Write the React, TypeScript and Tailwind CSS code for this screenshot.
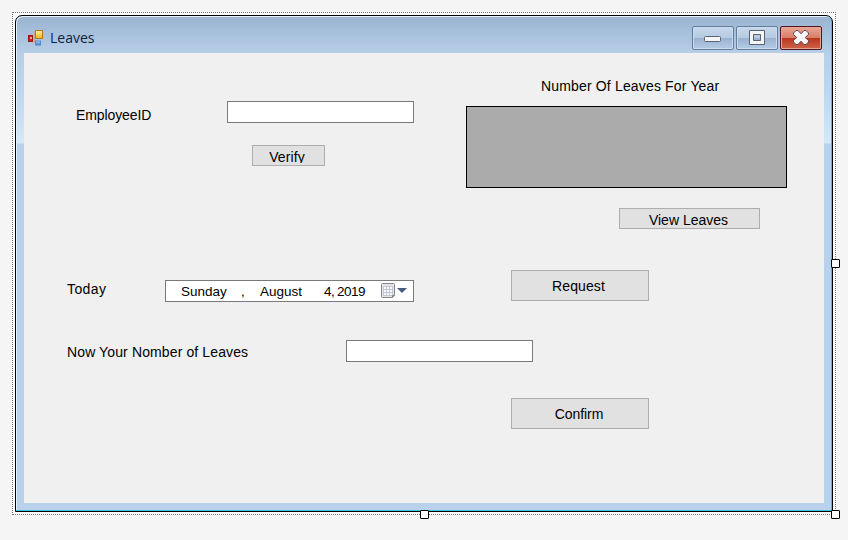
import React from "react";

function FormIcon() {
  return (
    <svg width="16" height="16" viewBox="0 0 16 16" className="shrink-0">
      <defs>
        <linearGradient id="gold" x1="0" y1="0" x2="0" y2="1">
          <stop offset="0" stopColor="#fff0a0" />
          <stop offset="1" stopColor="#eeb420" />
        </linearGradient>
        <linearGradient id="sky" x1="0" y1="0" x2="0" y2="1">
          <stop offset="0" stopColor="#b4d4ff" />
          <stop offset="1" stopColor="#3c78d0" />
        </linearGradient>
      </defs>
      <path d="M5 8.500h1.500v4h1M6.500 8.500v-6h1" stroke="#b5a999" fill="none" />
      <rect x="0.5" y="5.5" width="4" height="6" fill="#c8201c" stroke="#981814" />
      <rect x="2" y="7" width="2" height="2" fill="#f4a098" />
      <rect x="7.5" y="0.5" width="7" height="8" fill="url(#gold)" stroke="#b57a18" />
      <rect x="7.5" y="11" width="5" height="4" fill="url(#sky)" stroke="#5088d8" />
    </svg>
  );
}

function CaptionButtons() {
  return (
    <div className="flex gap-[2px]">
      <div className="flex h-6 w-[42px] items-center justify-center rounded-[2px] border border-[#637d9f] bg-[linear-gradient(#c6d8ec_0%,#b6cae1_48%,#98b1cf_50%,#b5cce6_100%)] shadow-[inset_0_0_0_1px_#c9dbed]">
        <svg width="18" height="8" viewBox="0 0 18 8" className="mt-[2px]">
          <rect x="0.5" y="1.5" width="16" height="5" rx="1" fill="#f5f5f5" stroke="#596273" />
        </svg>
      </div>
      <div className="flex h-6 w-[42px] items-center justify-center rounded-[2px] border border-[#637d9f] bg-[linear-gradient(#c6d8ec_0%,#b6cae1_48%,#98b1cf_50%,#b5cce6_100%)] shadow-[inset_0_0_0_1px_#c9dbed]">
        <svg width="18" height="16" viewBox="0 0 18 16" className="-mt-px">
          <path d="M1.5 .5h15v14h-15zM5.5 4.500h7v6h-7z" fillRule="evenodd" fill="#f5f5f5" stroke="#596273" />
        </svg>
      </div>
      <div className="flex h-6 w-[42px] items-center justify-center rounded-[2px] border border-[#4d1620] bg-[linear-gradient(#e9a796_0%,#d77e68_48%,#b8331b_50%,#cf6549_100%)] shadow-[inset_0_0_0_1px_#e8a494]">
        <svg width="18" height="16" viewBox="0 0 18 16" className="-mt-px">
          <path d="M4 .5h2L9 3.800 12 .5h2L16.500 3v1.500L13.200 7.500l3.300 3V12L14 14.500h-2L9 11.200 6 14.500H4L1.500 12v-1.500l3.300-3L1.500 4.500V3z" fill="#f7f7f7" stroke="#5a4755" strokeLinejoin="round" />
        </svg>
      </div>
    </div>
  );
}

function Calendar() {
  return (
    <svg width="27" height="17" viewBox="0 0 27 17" className="shrink-0">
      <path d="M1.500 .5h11q1 0 1 1v11l-2 2h-10q-1 0-1-1v-12q0-1 1-1z" fill="#e3e5e8" stroke="#85868a" />
      <path d="M2.500 3.500h9v9h-9zM5.500 3.500v9M8.500 3.500v9M2.500 6.500h9M2.500 9.500h9" fill="#f8f9fb" stroke="#c3c7d0" />
      <path d="M11.500 14.500v-2h2" fill="none" stroke="#85868a" />
      <path d="M16 5h10l-5 5z" fill="#465b80" />
    </svg>
  );
}

const input = "h-[22px] w-[187px] shrink-0 border border-[#7a7a7a] bg-white";
const button = "flex justify-center overflow-hidden border border-[#adadad] bg-[#e1e1e1]";
const handle = "absolute h-[9px] w-[9px] rounded-[1px] border border-black bg-white";

export default function App() {
  return (
    <div className="h-[540px] w-[848px] overflow-hidden bg-[#f5f5f5] pl-3 pt-3 font-['Liberation_Sans',Arial,sans-serif] text-[14px] leading-4 text-black">
      <div className="relative h-[503px] w-[824px] border border-dotted border-[#777] bg-[#fafafa] p-[2px]">
        <div className="flex h-[497px] w-[818px] flex-col rounded-t-[7px] border border-black bg-[linear-gradient(#9ab4d0_0px,#aac3de_22px,#b9cfe8_38px,#bdd5ee_75px,#d6e8f8_127px,#b9d1ea_128px)] px-2 shadow-[inset_-1px_-1px_0_#40c4de,inset_1px_1px_0_#e5f2fb]">
          <header className="flex h-[37px] items-start justify-between">
            <div className="flex items-center gap-[6px] pl-1 pt-[12px]">
              <FormIcon />
              <span className="font-['Open_Sans','Noto_Sans',sans-serif] text-[14px] leading-5 text-[#10233c]">Leaves</span>
            </div>
            <div className="pr-[2px] pt-[10px]"><CaptionButtons /></div>
          </header>
          <main className="h-[450px] w-[800px] bg-[#f0f0f0]">
            <section className="flex h-[217px]">
              <div className="w-[442px] pt-12">
                <div className="flex">
                  <span className="w-[203px] shrink-0 pl-[52px] pt-[6px] tracking-[-0.1px]">EmployeeID</span>
                  <div className={input} />
                </div>
                <div className={`${button} ml-[228px] mt-[22px] h-[21px] w-[73px]`}>
                  <span className="mr-[3px] mt-[3px] h-[14px] overflow-hidden tracking-[0.1px]">Verify</span>
                </div>
              </div>
              <div className="w-[321px] pt-[25px]">
                <div className="whitespace-nowrap pl-[75px] tracking-[0.16px]">Number Of Leaves For Year</div>
                <div className="mt-3 h-[82px] border border-black bg-[#ababab]" />
                <div className={`${button} ml-[153px] mt-5 h-[21px] w-[141px] pt-[3px]`}>
                  <span className="mr-[2px]">View Leaves</span>
                </div>
              </div>
            </section>
            <section className="flex">
              <div className="w-[487px] shrink-0">
                <div className="flex pt-[10px]">
                  <span className="w-[141px] shrink-0 pl-[43px] pt-px tracking-[0.4px]">Today</span>
                  <div className="flex h-[22px] w-[249px] shrink-0 border border-[#7a7a7a] bg-white pl-[15px] pt-[3px] text-[13.5px]">
                    <span className="w-[60px] shrink-0">Sunday</span>
                    <span className="w-[19px] shrink-0">,</span>
                    <span className="w-[64px] shrink-0">August</span>
                    <span className="w-[13px] shrink-0 tracking-[-0.4px]">4,</span>
                    <span className="w-[44px] shrink-0 tracking-[-0.5px]">2019</span>
                    <div className="-mt-[1px]"><Calendar /></div>
                  </div>
                </div>
                <div className="flex pt-[38px]">
                  <span className="w-[322px] shrink-0 whitespace-nowrap pl-[43px] pt-1 tracking-[0.12px]">Now Your Nomber of Leaves</span>
                  <div className={input} />
                </div>
              </div>
              <div className="flex flex-col gap-[97px]">
                <button className={`${button} h-[31px] w-[138px] pr-[3px] pt-[7px] tracking-[0.1px]`}>Request</button>
                <button className={`${button} h-[31px] w-[138px] pr-[2px] pt-[7px] tracking-[-0.05px]`}>Confirm</button>
              </div>
            </section>
          </main>
        </div>
        <div className={`${handle} left-[818px] top-[246px]`} />
        <div className={`${handle} left-[407px] top-[497px]`} />
        <div className={`${handle} left-[818px] top-[497px]`} />
      </div>
    </div>
  );
}
